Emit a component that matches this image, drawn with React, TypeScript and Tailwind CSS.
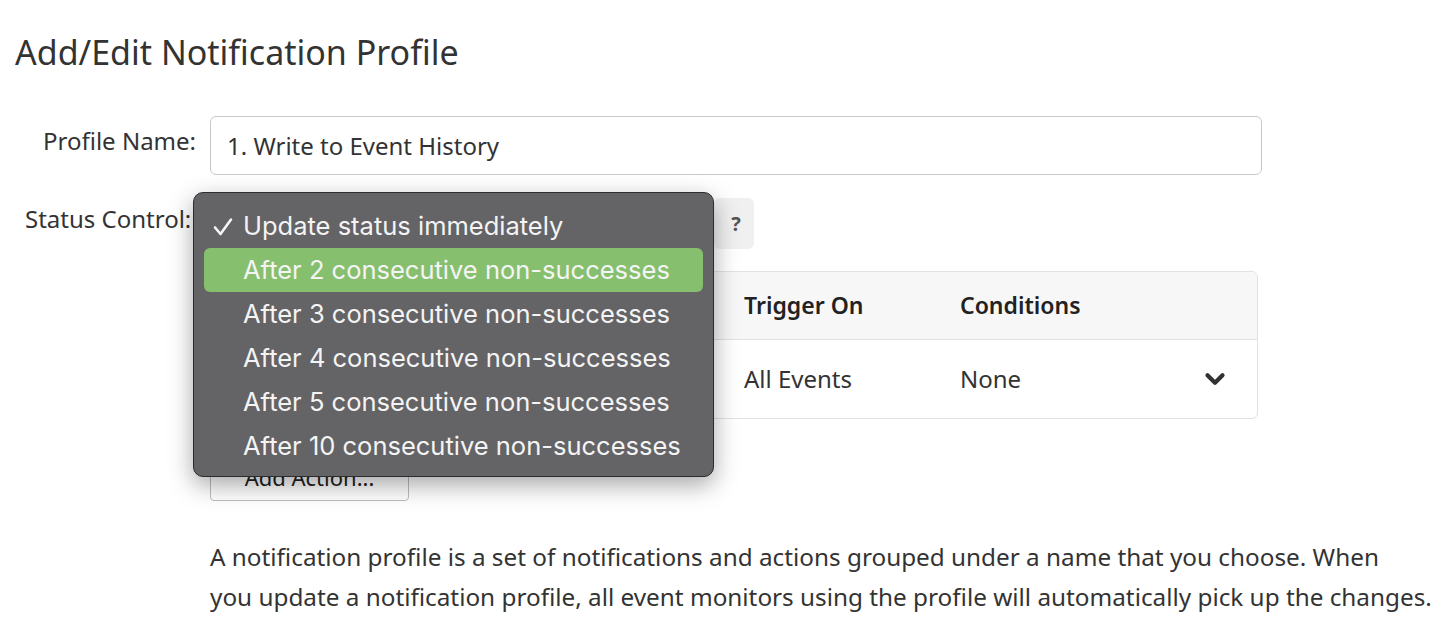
import { ChevronDown } from "lucide-react";

const options = [
  "Update status immediately",
  "After 2 consecutive non-successes",
  "After 3 consecutive non-successes",
  "After 4 consecutive non-successes",
  "After 5 consecutive non-successes",
  "After 10 consecutive non-successes",
];

function StatusMenu() {
  // native popup menu, opened over the status select
  return (
    <div
      className="absolute left-[193px] top-[192px] w-[521px] rounded-[10px] border border-[#2c2c2e] bg-[#646366] pt-[11px] pb-[8px] shadow-[0_8px_24px_rgba(0,0,0,0.35)]"
      style={{ fontFamily: "Inter, 'Noto Sans', sans-serif" }}
    >
      {options.map((opt, i) => (
        <div
          key={opt}
          className={
            "relative mx-[10px] flex h-[44px] items-center rounded-[6px] pl-[39px] text-[25.5px] text-[#f4f4f4] " +
            (i === 1 ? "bg-[#86bf6e]" : "")
          }
        >
          {i === 0 && (
            <svg className="absolute left-[9px] top-[13px] h-[20px] w-[20px]" viewBox="0 0 20 20">
              <path d="M2 10.5 L7.5 17 L18 2.5" fill="none" stroke="#f4f4f4" strokeWidth="2.6" strokeLinecap="round" strokeLinejoin="round" />
            </svg>
          )}
          {opt}
        </div>
      ))}
    </div>
  );
}

export default function App() {
  return (
    <div
      className="relative h-[626px] w-[1452px] overflow-hidden bg-white text-[#333]"
      style={{ fontFamily: "'Noto Sans', 'Open Sans', sans-serif" }}
    >
      <h1 className="pl-[15px] pt-[32px] text-[34px] leading-[40px] text-[#333]">
        Add/Edit Notification Profile
      </h1>

      <div className="mt-[44px] flex flex-col">
        <div className="flex items-center">
          <label className="-mt-[10px] w-[196px] text-right text-[24px]">Profile Name:</label>
          <div className="ml-[14px] flex h-[59px] w-[1052px] items-center rounded-[6px] border border-[#c8c8c8] px-[16px] text-[24px]">
            1. Write to Event History
          </div>
        </div>

        <div className="mt-[23px] flex items-center">
          <label className="-mt-[10px] w-[196px] pl-[25px] text-left text-[24px] whitespace-nowrap">Status Control:</label>
          <div className="ml-[14px] h-[51px] w-[496px] rounded-[6px] border border-[#c8c8c8]" />
          <button className="ml-[8px] flex h-[51px] w-[40px] items-center justify-center rounded-[6px] bg-[#f0f0f0] pl-[4px] text-[20px] font-bold text-[#555]">
            ?
          </button>
        </div>

        <div className="ml-[210px] mt-[22px] w-[1048px] overflow-hidden rounded-[6px] border border-[#e2e2e2]">
          <div className="flex h-[68px] items-center border-b border-[#e2e2e2] bg-[#f7f7f7] text-[23px] font-semibold text-[#222]">
            <div className="w-[533px]" />
            <div className="w-[216px]">Trigger On</div>
            <div>Conditions</div>
          </div>
          <div className="flex h-[78px] items-center text-[24px]">
            <div className="w-[533px]" />
            <div className="w-[216px]">All Events</div>
            <div className="flex-1">None</div>
            <ChevronDown className="mr-[27px] h-[30px] w-[30px] text-[#333]" strokeWidth={3.4} />
          </div>
        </div>

        <div className="ml-[210px] mt-[33px]">
          <button className="h-[49px] w-[199px] rounded-[4px] border border-[#bdbdbd] bg-white pt-[2px] text-[22px] text-[#222]">
            Add Action...
          </button>
        </div>

        <p className="ml-[210px] mt-[36px] w-[1240px] whitespace-nowrap text-[24.3px] leading-[40px] text-[#333]">
          A notification profile is a set of notifications and actions grouped under a name that you choose. When
          <br />
          you update a notification profile, all event monitors using the profile will automatically pick up the changes.
        </p>
      </div>

      <StatusMenu />
    </div>
  );
}
